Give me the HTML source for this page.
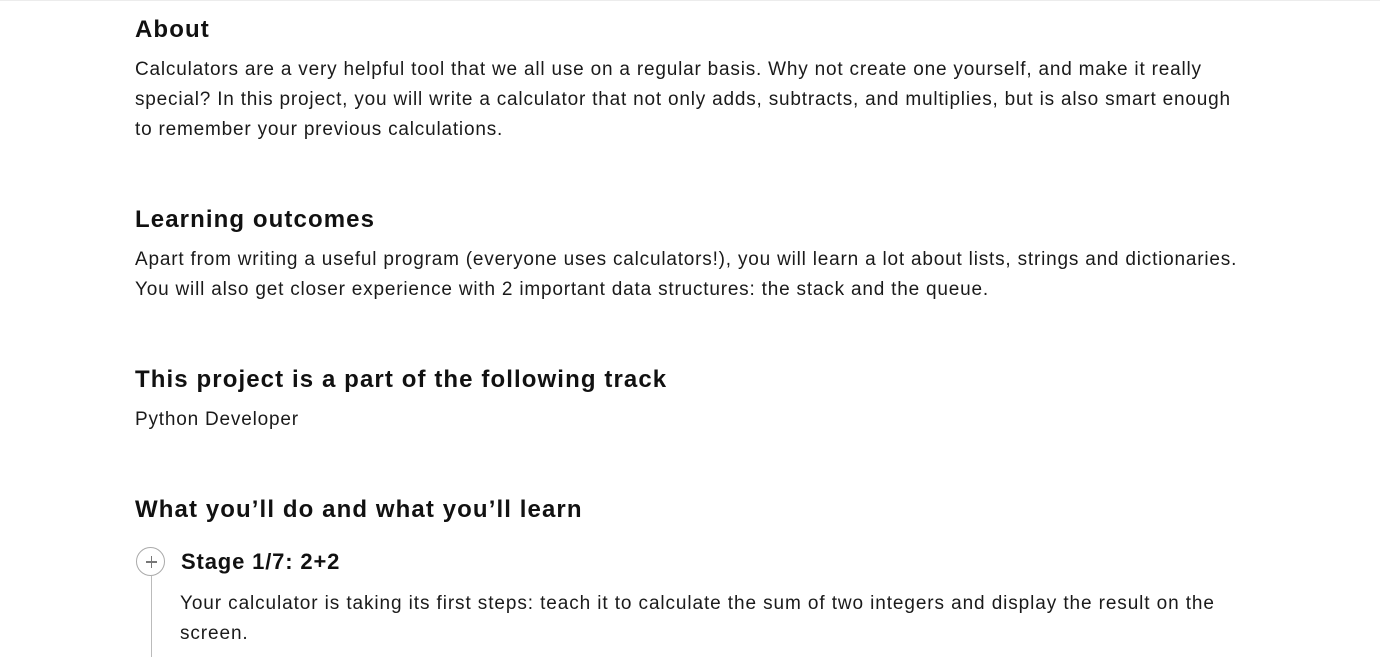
<!DOCTYPE html>
<html><head><meta charset="utf-8"><style>
html,body{margin:0;padding:0;background:#fff;}
body{width:1380px;height:656px;overflow:hidden;position:relative;font-family:"Liberation Sans",sans-serif;color:#111;border-top:1px solid #ececec;box-sizing:border-box;}
.t{position:absolute;white-space:nowrap;}
h2{position:absolute;margin:0;font-size:24px;font-weight:bold;left:135px;line-height:30px;white-space:nowrap;letter-spacing:1.1px;}
.p{position:absolute;left:135px;font-size:19px;line-height:30px;white-space:nowrap;color:#1a1a1a;letter-spacing:0.8px;}
</style></head><body>
<h2 style="top:14px">About</h2>
<div class="p" style="top:54px">Calculators are a very helpful tool that we all use on a regular basis. Why not create one yourself, and make it really<br>special? In this project, you will write a calculator that not only adds, subtracts, and multiplies, but is also smart enough<br>to remember your previous calculations.</div>
<h2 style="top:204px">Learning outcomes</h2>
<div class="p" style="top:244px">Apart from writing a useful program (everyone uses calculators!), you will learn a lot about lists, strings and dictionaries.<br>You will also get closer experience with 2 important data structures: the stack and the queue.</div>
<h2 style="top:364px">This project is a part of the following track</h2>
<div class="p" style="top:404px">Python Developer</div>
<h2 style="top:494px">What you’ll do and what you’ll learn</h2>
<div style="position:absolute;left:136px;top:546px;width:29px;height:29px;border:1px solid #aaa;border-radius:50%;box-sizing:border-box;"></div>
<div style="position:absolute;left:146px;top:560px;width:11px;height:1.5px;background:#777"></div>
<div style="position:absolute;left:150.7px;top:555px;width:1.5px;height:12px;background:#777"></div>
<div style="position:absolute;left:150.5px;top:575px;width:1px;height:81px;background:#bbb"></div>
<div class="t" style="left:181px;top:546px;font-size:22px;font-weight:bold;line-height:30px;letter-spacing:0.85px">Stage 1/7: 2+2</div>
<div class="p" style="left:180px;top:588px;letter-spacing:0.9px">Your calculator is taking its first steps: teach it to calculate the sum of two integers and display the result on the<br>screen.</div>
</body></html>
